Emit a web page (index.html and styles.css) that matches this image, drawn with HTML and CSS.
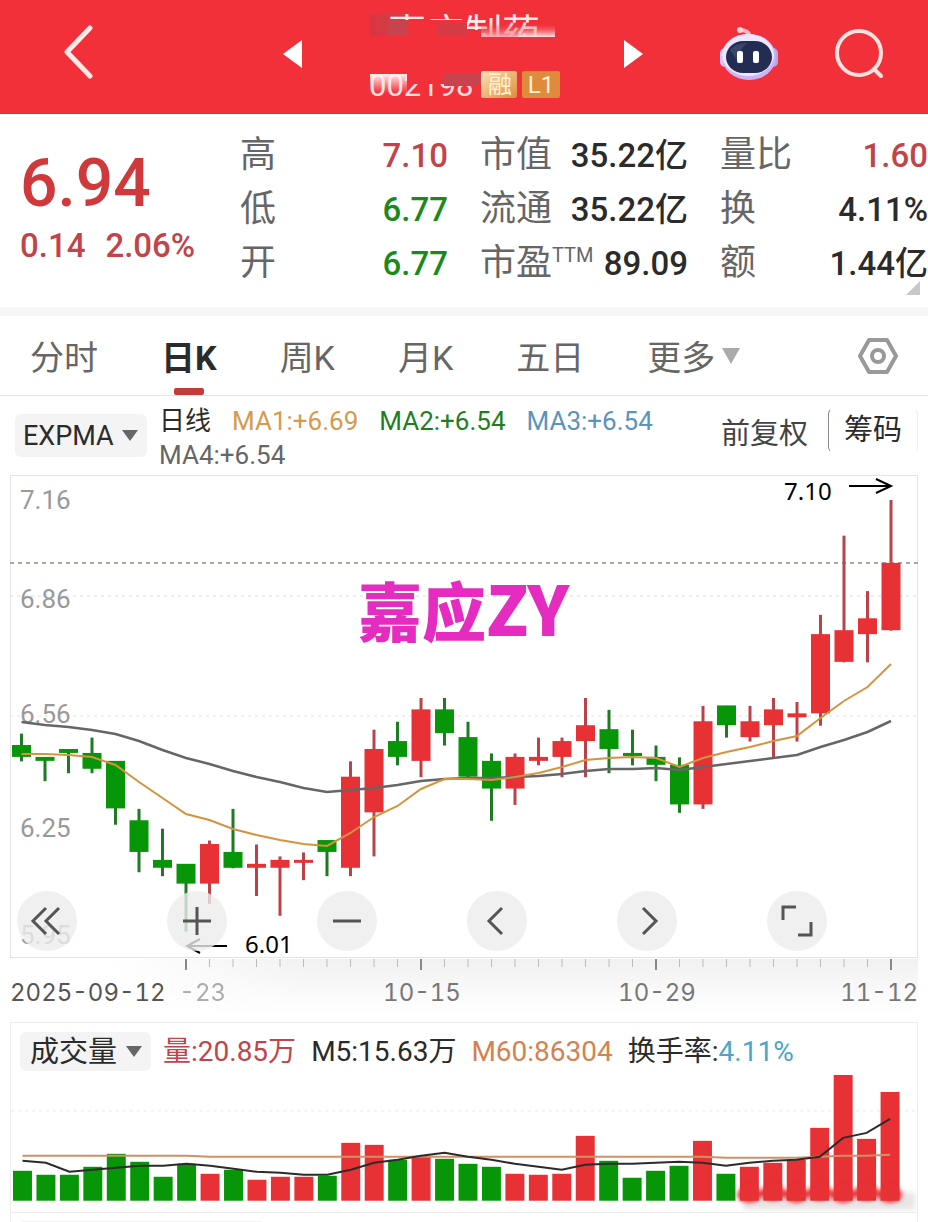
FILE: index.html
```html
<!DOCTYPE html>
<html lang="zh-CN">
<head>
    <meta charset="utf-8">
    <meta name="viewport" content="width=device-width, initial-scale=1">
    <title>日K</title>
    <link rel="stylesheet" href="styles.css">
</head>
<body>

    <header class="topbar">
        <button class="back" aria-label="返回">
            <svg width="30" height="54" viewBox="0 0 30 54"><path d="M27 3 L4 27 L27 51" fill="none" stroke="#ffe9e6" stroke-width="5" stroke-linecap="round" stroke-linejoin="round"/></svg>
        </button>
        <button aria-label="上一只">
            <svg width="20" height="30" viewBox="0 0 20 30"><path d="M19 1 V29 L0 15 Z" fill="#fff"/></svg>
        </button>
        <h1>
            <svg class="stock-name" viewBox="0 0 260 113">
                <defs>
                    <linearGradient id="fadeDark" x1="0" x2="1" y1="0" y2="0">
                        <stop offset="0" stop-color="#dc3440"/>
                        <stop offset="1" stop-color="#c9434e"/>
                    </linearGradient>
                    <linearGradient id="fadePink" x1="0" x2="0" y1="0" y2="1">
                        <stop offset="0" stop-color="#f13039" stop-opacity="0"/>
                        <stop offset="1" stop-color="#fbb0b8"/>
                    </linearGradient>
                    <linearGradient id="fadeWhite" x1="0" x2="0" y1="0" y2="1">
                        <stop offset="0" stop-color="#f13039" stop-opacity="0"/>
                        <stop offset="1" stop-color="#ffe9ea"/>
                    </linearGradient>
                    <linearGradient id="fadeDown" x1="0" x2="0" y1="0" y2="1">
                        <stop offset="0" stop-color="#fff3f1"/>
                        <stop offset="1" stop-color="#ffe0e0" stop-opacity="0"/>
                    </linearGradient>
                    <linearGradient id="badgeFade" x1="0" x2="1" y1="0" y2="1">
                        <stop offset="0" stop-color="#fbe3b4"/>
                        <stop offset="1" stop-color="#e08a3c"/>
                    </linearGradient>
                </defs>
                <rect x="37" y="14" width="37" height="22" fill="url(#fadeDark)"/>
                <text x="55" y="46" class="name-text">嘉应制药</text>
                <rect x="55" y="20" width="20" height="16" fill="#c9434e"/>
                <rect x="54" y="36" width="22" height="16" fill="#f13039"/>
                <rect x="75" y="20" width="58" height="30" fill="#f13039"/>
                <rect x="133" y="30" width="15" height="22" fill="#f13039"/>
                <rect x="148" y="36" width="60" height="16" fill="#f13039"/>
                <rect x="104" y="23" width="30" height="13" fill="#d63a44"/>
                <rect x="148" y="23" width="37" height="14" fill="url(#fadePink)"/>
                <rect x="185" y="23" width="37" height="14" fill="url(#fadeWhite)"/>
                <text x="36" y="96" class="code-text">002198</text>
                <rect x="74" y="72" width="73" height="12" fill="#f13039"/>
                <rect x="111" y="74" width="37" height="12" fill="#c9434e"/>
                <rect x="37" y="74" width="37" height="19" fill="url(#fadeDown)"/>
                <rect x="148" y="71" width="36" height="27" rx="2" fill="url(#badgeFade)"/>
                <text x="155" y="93" class="badge-text">融</text>
                <rect x="189" y="71" width="38" height="27" rx="2" fill="#e08a3c"/>
                <text x="208" y="93" class="badge-text" text-anchor="middle">L1</text>
            </svg>
        </h1>
        <button aria-label="下一只">
            <svg width="20" height="30" viewBox="0 0 20 30"><path d="M1 1 V29 L20 15 Z" fill="#fff"/></svg>
        </button>
        <button aria-label="助手">
            <svg width="60" height="56" viewBox="0 0 60 56">
                <path d="M31 10 Q29 4 21 4" fill="none" stroke="#ffb3bf" stroke-width="4" stroke-linecap="round"/>
                <circle cx="21" cy="4" r="3" fill="#ffd3d8"/>
                <rect x="1" y="22" width="10" height="19" rx="5" fill="#d9c8ff"/>
                <rect x="49" y="22" width="10" height="19" rx="5" fill="#b9a4f0"/>
                <ellipse cx="30" cy="31" rx="27" ry="23" fill="#c9b4f5"/>
                <ellipse cx="29" cy="29" rx="26" ry="21" fill="#ece6ff"/>
                <rect x="7" y="15" width="46" height="32" rx="17" fill="#232c52"/>
                <path d="M11 24 Q16 17 28 17 Q20 24 18 34 Z" fill="#3b4569"/>
                <rect x="18" y="25" width="6" height="12" rx="2" fill="#fff"/>
                <rect x="34" y="25" width="6" height="12" rx="2" fill="#fff"/>
            </svg>
        </button>
        <button aria-label="搜索">
            <svg width="50" height="50" viewBox="0 0 50 50"><g fill="none" stroke="#ffe1de" stroke-width="4" stroke-linecap="round"><circle cx="25" cy="24" r="22"/><path d="M40 40 L47 47"/></g></svg>
        </button>
    </header>

    <section class="quote">
        <div class="last">
            <strong>6.94</strong>
            <p><span>0.14</span><span>2.06%</span></p>
        </div>
        <dl>
            <div><dt>高</dt><dd class="up">7.10</dd></div>
            <div><dt>低</dt><dd class="down">6.77</dd></div>
            <div><dt>开</dt><dd class="down">6.77</dd></div>
        </dl>
        <dl>
            <div><dt>市值</dt><dd>35.22亿</dd></div>
            <div><dt>流通</dt><dd>35.22亿</dd></div>
            <div><dt>市盈<sup>TTM</sup></dt><dd>89.09</dd></div>
        </dl>
        <dl>
            <div><dt>量比</dt><dd class="up">1.60</dd></div>
            <div><dt>换</dt><dd>4.11%</dd></div>
            <div><dt>额</dt><dd>1.44亿</dd></div>
        </dl>
    </section>

    <nav class="tabs">
        <button>分时</button>
        <button class="active">日K</button>
        <button>周K</button>
        <button>月K</button>
        <button>五日</button>
        <button class="more">更多</button>
        <button class="settings" aria-label="设置">
            <svg width="40" height="38" viewBox="0 0 40 38"><g fill="none" stroke="#999" stroke-width="4" stroke-linejoin="round"><path d="M11 3 H29 L38 19 L29 35 H11 L2 19 Z"/><circle cx="20" cy="19" r="6"/></g></svg>
        </button>
    </nav>

    <section class="indicators">
        <label class="picker">
            <select aria-label="指标"><option>EXPMA</option></select>
        </label>
        <ul class="legend">
            <li>日线</li>
            <li class="ma1">MA1:+6.69</li>
            <li class="ma2">MA2:+6.54</li>
            <li class="ma3">MA3:+6.54</li>
            <li class="ma4">MA4:+6.54</li>
        </ul>
        <div class="actions">
            <button>前复权</button>
            <button class="chips">筹码</button>
        </div>
    </section>

    <section class="price">
        <svg id="priceChart" viewBox="0 0 908 547"></svg>
        <div class="controls">
            <button aria-label="最早"><svg width="40" height="40" viewBox="0 0 40 40"><path d="M19 7 L6 20 L19 33 M32 7 L19 20 L32 33"/></svg></button>
            <button aria-label="放大"><svg width="40" height="40" viewBox="0 0 40 40"><path d="M6 20 H34 M20 6 V34"/></svg></button>
            <button aria-label="缩小"><svg width="40" height="40" viewBox="0 0 40 40"><path d="M6 20 H34"/></svg></button>
            <button aria-label="向左"><svg width="40" height="40" viewBox="0 0 40 40"><path d="M25 7 L12 20 L25 33"/></svg></button>
            <button aria-label="向右"><svg width="40" height="40" viewBox="0 0 40 40"><path d="M16 7 L29 20 L16 33"/></svg></button>
            <button aria-label="全屏"><svg width="40" height="40" viewBox="0 0 40 40"><path d="M6 19 V6 H19 M34 21 V34 H21"/></svg></button>
        </div>
    </section>

    <section class="volume">
        <div class="volume-head">
            <label class="picker">
                <select aria-label="副图"><option>成交量</option></select>
            </label>
            <span class="vol">量:20.85万</span>
            <span>M5:15.63万</span>
            <span class="m60">M60:86304</span>
            <span>换手率:<b>4.11%</b></span>
        </div>
        <svg id="volumeChart" viewBox="0 0 908 141"></svg>
    </section>
    <section class="next-panel"><div></div></section>

    <script src="chart.js"></script>
</body>
</html>
```

FILE: styles.css
```css
* {
    box-sizing: border-box;
}

body {
    margin: 0;
    background: #fff;
    color: #2b2b2b;
    font-family: Roboto, "Noto Sans CJK SC", sans-serif;
    overflow-x: hidden;
}

button {
    border: none;
    background: none;
    padding: 0;
    color: inherit;
    font: inherit;
    cursor: pointer;
}

svg {
    display: block;
}

h1, p, dl, dd, ul {
    margin: 0;
    padding: 0;
}

/* top bar */
.topbar {
    display: grid;
    grid-template-columns: 253fr 80fr 260fr 80fr 151fr 70fr 34fr;
    align-items: center;
    background: #f13039;
    border-bottom: 1px solid #c93a40;
}

.topbar button {
    display: flex;
    justify-content: center;
    padding-bottom: 6px;
}

.topbar .back {
    justify-content: flex-start;
    padding-bottom: 10px;
    padding-left: 63px;
}

.stock-name {
    width: 100%;
}

.name-text {
    font-size: 38px;
    font-weight: 400;
    fill: #ffe9ea;
}

.code-text {
    font-size: 31px;
    font-weight: 400;
    fill: #ffe0e0;
}

.badge-text {
    font-size: 24px;
    font-weight: 400;
    fill: #fff3d6;
}

/* quote */
.quote {
    position: relative;
    display: grid;
    grid-template-columns: repeat(4, 1fr);
    column-gap: 32px;
    padding: 14px 0 17px;
    border-bottom: 9px solid #f6f6f6;
}

.quote::after {
    content: "";
    position: absolute;
    right: 8px;
    bottom: 12px;
    border: 7px solid transparent;
    border-right-color: #c8c8c8;
    border-bottom-color: #c8c8c8;
}

.last {
    padding-left: 20px;
    color: #d0393b;
    white-space: nowrap;
}

.last strong {
    display: block;
    margin-top: 16px;
    font-size: 66px;
    font-weight: 500;
    line-height: 80px;
}

.last p {
    display: flex;
    gap: 20px;
    color: #c0444a;
    font-size: 33px;
    font-weight: 500;
    line-height: 44px;
}

.quote dl div {
    display: flex;
    justify-content: space-between;
    align-items: center;
    height: 54px;
    white-space: nowrap;
}

.quote dt {
    color: #666;
    font-size: 36px;
    line-height: 54px;
}

.quote sup {
    font-size: 20px;
    line-height: 20px;
}

.quote dd {
    padding-top: 2px;
    font-size: 33px;
    font-weight: 500;
    line-height: 52px;
}

.quote .up {
    color: #c0444a;
}

.quote .down {
    color: #1a8a1a;
}

/* period tabs */
.tabs {
    display: flex;
    gap: 63px;
    height: 80px;
    padding: 0 30px;
    border-bottom: 1px solid #e6e6e6;
    color: #666;
    font-size: 34px;
}

.tabs .active {
    position: relative;
    color: #2b2b2b;
    font-weight: 700;
}

.tabs .active::after {
    content: "";
    position: absolute;
    left: 50%;
    bottom: 0;
    width: 30px;
    height: 7px;
    margin-left: -15px;
    border-radius: 2px;
    background: #c43c3a;
}

.tabs .more {
    display: flex;
    align-items: center;
    gap: 7px;
}

.tabs .more::after {
    content: "";
    border: 9px solid transparent;
    border-top: 16px solid #aaa;
    border-bottom: none;
}

.tabs .settings {
    margin-left: auto;
}

/* indicator row */
.indicators {
    display: flex;
    align-items: center;
    height: 79px;
    padding: 0 10px 0 15px;
}

.picker {
    position: relative;
    display: block;
    flex: none;
}

.picker select {
    display: block;
    appearance: none;
    height: 43px;
    padding: 0 33px 0 8px;
    border: none;
    border-radius: 6px;
    background: #f4f4f4;
    color: #2b2b2b;
    font-family: inherit;
    font-size: 27px;
}

.picker::after {
    content: "";
    position: absolute;
    right: 9px;
    top: 50%;
    margin-top: -6px;
    border: 8px solid transparent;
    border-top: 11px solid #666;
    border-bottom: none;
    pointer-events: none;
}

.legend {
    display: flex;
    flex: 1;
    flex-wrap: wrap;
    column-gap: 21px;
    margin-left: 12px;
    padding-top: 4px;
    list-style: none;
    font-size: 26px;
    line-height: 34px;
}

.ma1 { color: #d69a4c; }
.ma2 { color: #1f7f1f; }
.ma3 { color: #5a94bd; }
.ma4 { color: #666; }

.actions {
    display: flex;
    align-items: center;
    gap: 20px;
    padding-bottom: 10px;
    color: #444;
    font-size: 29px;
}

.chips {
    height: 45px;
    padding: 0 15px;
    border: 1px solid transparent;
    border-left-color: #888;
    border-right-color: #eee;
    border-radius: 6px;
    color: #2b2b2b;
    line-height: 43px;
}

/* price chart */
.price {
    position: relative;
    margin: 0 10px;
}

.price svg,
.volume svg {
    width: 100%;
    overflow: visible;
}

.axis {
    font-size: 26px;
    fill: #999;
}

.date {
    font-family: Inter, sans-serif;
    font-size: 24px;
    font-variant-numeric: tabular-nums;
    fill: #777;
}

.first {
    fill: #555;
}

.mark {
    font-family: "Noto Sans", sans-serif;
    font-size: 24px;
    fill: #000;
}

.author {
    font-family: "Noto Sans CJK SC", sans-serif;
    font-size: 64px;
    font-weight: 900;
    fill: #e52cc0;
}

.author tspan {
    font-size: 69px;
}

.controls {
    position: absolute;
    left: 7px;
    right: 91px;
    top: 416px;
    display: flex;
    justify-content: space-between;
}

.controls button {
    display: flex;
    align-items: center;
    justify-content: center;
    width: 60px;
    height: 60px;
    border-radius: 50%;
    background: rgba(236, 236, 236, 0.8);
}

.controls svg {
    width: 40px;
    fill: none;
    stroke: #555;
    stroke-width: 3;
}

/* volume */
.volume {
    margin: 0 10px;
    border: 1px solid #ececec;
}

.volume-head {
    display: flex;
    align-items: center;
    gap: 15px;
    padding: 9px 0 0 9px;
    font-size: 28px;
    line-height: 39px;
    white-space: nowrap;
}

.volume-head .picker {
    margin-right: -3px;
}

.volume-head span {
    height: 39px;
}

.volume-head select {
    height: 39px;
    padding-left: 10px;
    font-size: 29px;
}

.vol { color: #c0444a; }
.m60 { color: #d4824e; }

.volume-head b {
    color: #4aa5c8;
    font-weight: 400;
}

.next-panel {
    margin: 0 10px;
    padding: 8px 10px 0;
    border: 1px solid #ececec;
    border-top: none;
    border-bottom: none;
}

.next-panel div {
    width: 240px;
    height: 2px;
    background: #f4f4f4;
}
```

FILE: chart.js
```js
// [high, body top, body bottom, low, rising]
var candles = [
    [6.51, 6.48, 6.45, 6.44, 0], [6.45, 6.45, 6.44, 6.39, 0], [6.47, 6.47, 6.46, 6.41, 0],
    [6.50, 6.46, 6.42, 6.41, 0], [6.44, 6.44, 6.32, 6.28, 0], [6.32, 6.29, 6.21, 6.16, 0],
    [6.27, 6.19, 6.17, 6.15, 0], [6.18, 6.18, 6.13, 6.01, 0], [6.24, 6.23, 6.13, 6.08, 1],
    [6.32, 6.21, 6.17, 6.17, 0], [6.23, 6.18, 6.17, 6.10, 1], [6.20, 6.19, 6.17, 6.05, 1],
    [6.21, 6.19, 6.19, 6.14, 1], [6.24, 6.24, 6.21, 6.15, 0], [6.44, 6.40, 6.17, 6.15, 1],
    [6.52, 6.47, 6.31, 6.20, 1], [6.54, 6.49, 6.45, 6.43, 0], [6.60, 6.57, 6.44, 6.40, 1],
    [6.60, 6.57, 6.51, 6.48, 0], [6.54, 6.50, 6.40, 6.40, 0], [6.46, 6.44, 6.37, 6.29, 0],
    [6.46, 6.45, 6.37, 6.33, 1], [6.50, 6.45, 6.44, 6.43, 1], [6.50, 6.49, 6.45, 6.40, 1],
    [6.60, 6.53, 6.49, 6.40, 1], [6.57, 6.52, 6.47, 6.41, 0], [6.52, 6.46, 6.46, 6.43, 0],
    [6.48, 6.45, 6.43, 6.39, 0], [6.45, 6.43, 6.33, 6.31, 0], [6.58, 6.54, 6.33, 6.32, 1],
    [6.58, 6.58, 6.53, 6.50, 0], [6.58, 6.54, 6.50, 6.49, 1], [6.60, 6.57, 6.53, 6.45, 1],
    [6.59, 6.56, 6.55, 6.49, 1], [6.81, 6.76, 6.56, 6.53, 1], [7.01, 6.77, 6.69, 6.69, 1],
    [6.87, 6.80, 6.76, 6.69, 1], [7.10, 6.94, 6.77, 6.77, 1]
];
var fast = [279, 279, 280, 282, 290, 307, 323, 339, 345, 354, 360, 365, 369, 371, 358, 342, 331, 314, 304,
    304, 305, 302, 298, 292, 285, 283, 282, 283, 292, 283, 277, 272, 266, 261, 243, 226, 212, 189];
var slow = [247, 250, 252, 255, 259, 266, 275, 283, 289, 296, 302, 307, 313, 317, 315, 313, 310, 306, 304,
    303, 303, 302, 301, 299, 296, 294, 294, 293, 295, 292, 289, 286, 283, 280, 272, 265, 257, 246];
var volumes = [30, 26, 26, 34, 47, 39, 24, 37, 27, 31, 21, 24, 24, 25, 58, 56, 41, 45, 42,
    37, 34, 27, 26, 27, 65, 40, 23, 30, 35, 60, 27, 34, 38, 41, 73, 126, 62, 109];
var m5 = [90, 92, 101, 99, 97, 95, 95, 93, 95, 98, 101, 102, 104, 104, 99, 92, 89, 85, 82,
    86, 89, 93, 96, 99, 94, 93, 93, 92, 91, 92, 95, 92, 90, 89, 86, 67, 62, 48];
var m60 = [85, 85, 85, 85, 85, 85, 85, 85, 86, 86, 86, 86, 86, 86, 86, 86, 86, 86, 86,
    86, 86, 86, 86, 86, 86, 86, 86, 86, 86, 86, 87, 87, 87, 87, 86, 85, 85, 84];

var RED = "#e73135", GREEN = "#079607";

function x(i) {
    return 11.5 + i * 23.5;
}

function y(price) {
    return 25 + (7.10 - price) * 396;
}

function rect(left, top, w, h, color) {
    return '<rect x="' + left + '" y="' + top + '" width="' + w + '" height="' + h + '" fill="' + color + '"/>';
}

function line(x1, y1, x2, y2, color, extra) {
    return '<line x1="' + x1 + '" y1="' + y1 + '" x2="' + x2 + '" y2="' + y2 + '" stroke="' + color + '" ' + (extra || "") + '/>';
}

function curve(values, color, width) {
    var points = values.map(function (v, i) { return x(i) + "," + v; }).join(" ");
    return '<polyline points="' + points + '" fill="none" stroke="' + color + '" stroke-width="' + width + '"/>';
}

function text(left, top, cls, value, extra) {
    return '<text x="' + left + '" y="' + top + '" class="' + cls + '" ' + (extra || "") + '>' + value + '</text>';
}

function drawPrice() {
    var out = '<defs><linearGradient id="shade" x1="0" x2="0" y1="0" y2="1"><stop offset="0" stop-color="#f1f1f1"/><stop offset="1" stop-color="#fff"/></linearGradient>' +
        '<linearGradient id="side" x1="0" x2="1" y1="0" y2="0"><stop offset="0" stop-color="#fff"/><stop offset="1" stop-color="#fff" stop-opacity="0"/></linearGradient></defs>';
    out += rect(100, 484, 808, 55, "url(#shade)") + rect(100, 484, 200, 55, "url(#side)");
    out += '<rect x="0.5" y="0.5" width="907" height="482" fill="none" stroke="#e4e4e4"/>';
    out += line(0, 121, 908, 121, "#dcdcdc", 'stroke-dasharray="3 4"');
    out += line(0, 241, 908, 241, "#e4e4e4", 'stroke-dasharray="3 4"');
    out += line(0, 88, 908, 88, "#a8a8a0", 'stroke-width="2" stroke-dasharray="4 4"');

    [["7.16", 34], ["6.86", 133], ["6.56", 248], ["6.25", 362], ["5.95", 469]].forEach(function (l) {
        out += text(10, l[1], "axis", l[0]);
    });

    candles.forEach(function (c, i) {
        var color = c[4] ? RED : GREEN;
        var wick = c[4] ? "#b8444a" : "#1f7a24";
        out += rect(x(i) - 1.5, y(c[0]), 3, y(c[3]) - y(c[0]), wick);
        out += rect(x(i) - 9.5, y(c[1]) - 0.5, 19, Math.max(3, y(c[2]) - y(c[1])), color);
    });
    out += curve(slow, "#666", 2.5) + curve(fast, "#d5933f", 2);

    // high and low marks
    out += text(774, 25, "mark", "7.10") + text(235, 478, "mark", "6.01");
    out += '<path d="M839 11 H881 M866 4 L881 11 L866 18 M217 471 H177 M190 464 L177 471 L190 478" fill="none" stroke="#000" stroke-width="2"/>';
    out += text(348, 161, "author", "嘉应<tspan>ZY</tspan>");

    for (var i = 7; i < candles.length; i++) {
        var major = (i - 7) % 10 === 0;
        out += line(x(i), 484, x(i), major ? 495 : 492, major ? "#888" : "#bbb", 'stroke-width="' + (major ? 2 : 1) + '"');
    }
    out += text(0, 526, "date first", "2025-09-12");
    out += text(216, 526, "date", "-23", 'text-anchor="end" opacity="0.6"');
    out += text(412, 526, "date", "10-15", 'text-anchor="middle"');
    out += text(647, 526, "date", "10-29", 'text-anchor="middle"');
    out += text(908, 526, "date", "11-12", 'text-anchor="end"');
    document.getElementById("priceChart").innerHTML = out;
}

function drawVolume() {
    var base = 130;
    var out = '<defs><filter id="soft" x="-20%" y="-50%" width="140%" height="200%"><feGaussianBlur stdDeviation="2"/></filter></defs>';
    out += line(0, 40, 908, 40, "#e8e8e8", 'stroke-dasharray="3 4"');
    out += '<g filter="url(#soft)">' + rect(734, 122, 172, 17, "#e9e6e6") + '</g>';
    volumes.forEach(function (v, i) {
        out += rect(x(i) - 9.5, base - v, 19, v, candles[i][4] ? RED : GREEN);
    });
    // blurred foot of the last bars
    out += '<g filter="url(#soft)">';
    for (var i = 31; i < volumes.length; i++) {
        out += '<ellipse cx="' + x(i) + '" cy="' + (122 + i % 2 * 2) + '" rx="12" ry="8" fill="' + RED + '"/>';
    }
    out += '</g>';
    out += curve(m60, "#cf9068", 2) + curve(m5, "#2b2b2b", 2);
    document.getElementById("volumeChart").innerHTML = out;
}

drawPrice();
drawVolume();
```
